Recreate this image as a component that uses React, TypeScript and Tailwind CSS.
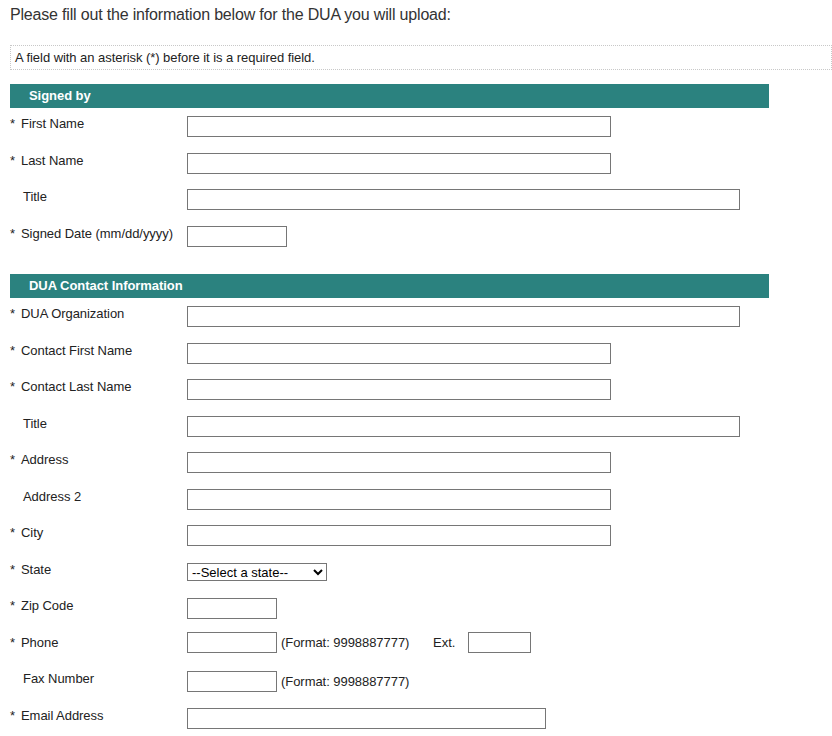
import React from "react";

type Row = {
  label: string;
  req: boolean;
  kind: "text" | "select" | "phone" | "fax";
  w?: number;
};

const widthClass: Record<number, string> = {
  424: "w-[424px]",
  553: "w-[553px]",
  359: "w-[359px]",
  100: "w-[100px]",
  90: "w-[90px]",
};

function Label({ label, req }: { label: string; req: boolean }) {
  return (
    <div className="w-[177px] shrink-0 text-[13px] leading-[15px] text-[#222] tracking-[-0.05px]">
      {req ? (
        <span className="flex">
          <span className="w-[11px] shrink-0">*</span>
          <span>{label}</span>
        </span>
      ) : (
        <span className="pl-[13px]">{label}</span>
      )}
    </div>
  );
}

function Input({ w }: { w: number }) {
  return (
    <input
      type="text"
      className={`${widthClass[w]} h-[21px] border border-[#767676] bg-white outline-none`}
    />
  );
}

function FormRow({ row }: { row: Row }) {
  return (
    <div className="flex items-start h-[36.5px]">
      <Label label={row.label} req={row.req} />
      {row.kind === "text" && <Input w={row.w!} />}
      {row.kind === "select" && (
        <select className="mt-[1.5px] w-[140px] h-[18px] border border-[#767676] bg-white text-[13px] leading-[15px] text-black font-['Liberation_Sans',Arial,sans-serif] rounded-none">
          <option>--Select a state--</option>
        </select>
      )}
      {(row.kind === "phone" || row.kind === "fax") && (
        <div
          className={`flex items-center h-[21px] ${
            row.kind === "phone" ? "-mt-[2.5px]" : ""
          }`}
        >
          <input
            type="text"
            className="w-[90px] h-[21px] border border-[#767676] bg-white outline-none"
          />
          <span
            className={`ml-[4px] text-[13px] leading-[15px] text-[#222] tracking-[-0.05px] ${
              row.kind === "phone" ? "w-[152px]" : ""
            }`}
          >
            (Format: 9998887777)
          </span>
          {row.kind === "phone" && (
            <>
              <span className="w-[35px] text-[13px] leading-[15px] text-[#222]">
                Ext.
              </span>
              <input
                type="text"
                className="w-[63px] h-[21px] border border-[#767676] bg-white outline-none"
              />
            </>
          )}
        </div>
      )}
    </div>
  );
}

function Header({ title }: { title: string }) {
  return (
    <div className="w-[759px] h-[24px] bg-[#2b827f] flex items-center pl-[19px] text-white font-bold text-[13px] tracking-[-0.05px]">
      {title}
    </div>
  );
}

const signed: Row[] = [
  { label: "First Name", req: true, kind: "text", w: 424 },
  { label: "Last Name", req: true, kind: "text", w: 424 },
  { label: "Title", req: false, kind: "text", w: 553 },
  { label: "Signed Date (mm/dd/yyyy)", req: true, kind: "text", w: 100 },
];

const contact: Row[] = [
  { label: "DUA Organization", req: true, kind: "text", w: 553 },
  { label: "Contact First Name", req: true, kind: "text", w: 424 },
  { label: "Contact Last Name", req: true, kind: "text", w: 424 },
  { label: "Title", req: false, kind: "text", w: 553 },
  { label: "Address", req: true, kind: "text", w: 424 },
  { label: "Address 2", req: false, kind: "text", w: 424 },
  { label: "City", req: true, kind: "text", w: 424 },
  { label: "State", req: true, kind: "select" },
  { label: "Zip Code", req: true, kind: "text", w: 90 },
  { label: "Phone", req: true, kind: "phone" },
  { label: "Fax Number", req: false, kind: "fax" },
  { label: "Email Address", req: true, kind: "text", w: 359 },
];

export default function App() {
  return (
    <div className="w-[832px] min-h-[736px] bg-white pl-[10px] font-['Liberation_Sans',Arial,sans-serif]">
      <div className="pt-[6px] text-[16px] leading-[18px] text-[#333] tracking-[-0.18px]">
        Please fill out the information below for the DUA you will upload:
      </div>
      <div className="mt-[21px] h-[25px] border border-dotted border-[#c8c8c8] flex items-center pl-[4px] text-[13px] leading-[15px] text-[#222] tracking-[-0.05px]">
        A field with an asterisk (*) before it is a required field.
      </div>
      <div className="mt-[14px]">
        <Header title="Signed by" />
      </div>
      <div className="mt-[8px]">
        {signed.map((r) => (
          <FormRow key={r.label} row={r} />
        ))}
      </div>
      <div className="mt-[12px]">
        <Header title="DUA Contact Information" />
      </div>
      <div className="mt-[8px]">
        {contact.map((r, i) => (
          <FormRow key={r.label + i} row={r} />
        ))}
      </div>
    </div>
  );
}
